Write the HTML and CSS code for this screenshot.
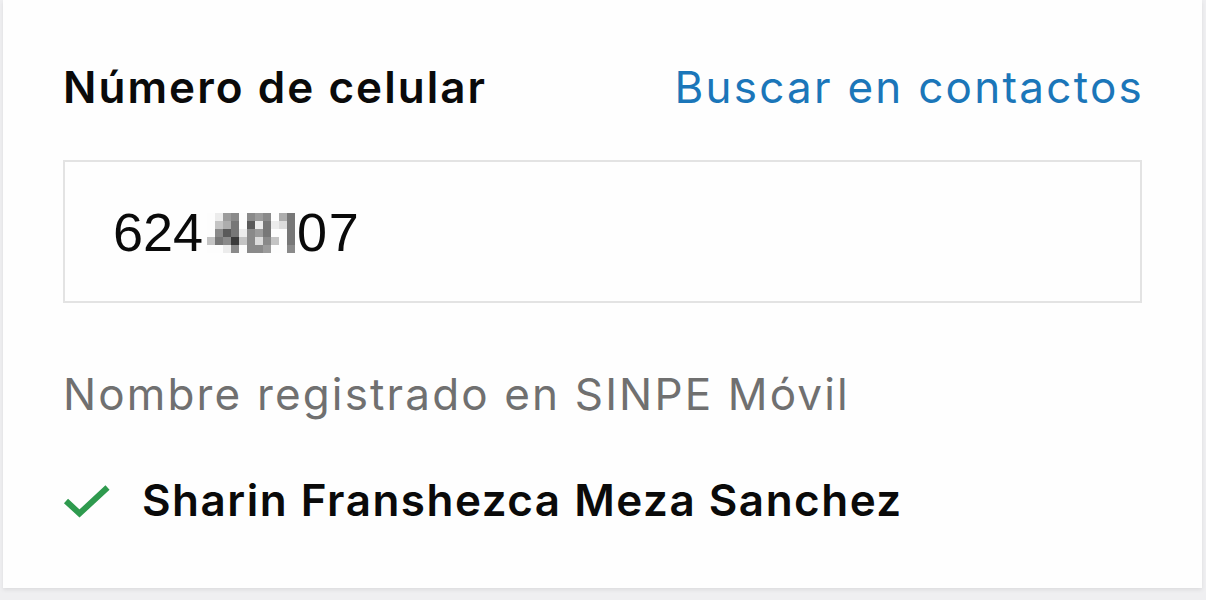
FILE: index.html
```html
<!DOCTYPE html>
<html lang="es">
<head>
<meta charset="utf-8">
<title>SINPE Móvil</title>
<link rel="stylesheet" href="styles.css">
</head>
<body>
<div class="card">
  <div class="header">
    <span class="label">Número de celular</span>
    <span class="link">Buscar en contactos</span>
  </div>
  <div class="input">
    <span class="num">624</span>
    <span class="pix">
      <i class="w"></i><i class="g1"></i><i class="g5"></i><i class="g6"></i><i class="w"></i><i class="g6"></i><i class="g5"></i><i class="g6"></i><i class="w"></i><i class="g4"></i><i class="g7"></i>
      <i class="w"></i><i class="g3"></i><i class="g4"></i><i class="g7"></i><i class="w"></i><i class="g8"></i><i class="g1"></i><i class="g7"></i><i class="g1"></i><i class="g2"></i><i class="g7"></i>
      <i class="w"></i><i class="g6"></i><i class="g8"></i><i class="g7"></i><i class="g1"></i><i class="g6"></i><i class="g5"></i><i class="g7"></i><i class="w"></i><i class="w"></i><i class="g7"></i>
      <i class="g3"></i><i class="g7"></i><i class="g6"></i><i class="g9"></i><i class="g3"></i><i class="g6"></i><i class="g2"></i><i class="g6"></i><i class="g3"></i><i class="w"></i><i class="g7"></i>
      <i class="w"></i><i class="w"></i><i class="g1"></i><i class="g6"></i><i class="w"></i><i class="g6"></i><i class="g6"></i><i class="g5"></i><i class="w"></i><i class="w"></i><i class="g6"></i>
    </span>
    <span class="num tail">07</span>
  </div>
  <div class="sub">Nombre registrado en SINPE Móvil</div>
  <div class="name-row">
    <svg class="check" viewBox="0 0 48 34" width="48" height="34"><path d="M3 17 L16.5 29.5 L44.5 3.5" fill="none" stroke="#2e9a4e" stroke-width="6"/></svg>
    <span class="name">Sharin Franshezca Meza Sanchez</span>
  </div>
</div>
</body>
</html>
```
FILE: styles.css
```css
html, body { margin: 0; padding: 0; }
body {
  background: #efeff1;
  font-family: Inter, "Noto Sans", sans-serif;
  width: 1206px;
  height: 600px;
  overflow: hidden;
}
.card {
  box-sizing: border-box;
  height: 588px;
  margin: 0 4px 0 3px;
  background: #fefefe;
  padding: 61px 60px 0 60px;
  box-shadow: 0 2px 4px rgba(0,0,0,0.08);
}
.header {
  display: flex;
  justify-content: space-between;
  align-items: baseline;
  height: 60px;
  line-height: 53px;
}
.label {
  font-size: 44px;
  font-weight: 600;
  letter-spacing: 2.05px;
  color: #0a0a0a;
}
.link {
  font-size: 44px;
  letter-spacing: 2.25px;
  margin-right: -2px;
  color: #1b76b9;
}
.input {
  box-sizing: border-box;
  margin-top: 39px;
  height: 143px;
  border: 2px solid #e3e3e3;
  padding-left: 48px;
  display: flex;
  align-items: center;
  font-family: "Liberation Sans", Arial, sans-serif;
  font-size: 54px;
  color: #0a0a0a;
}
.num { line-height: 1; }
.tail { margin-left: 2px; letter-spacing: 1.5px; }
.pix {
  display: grid;
  grid-template-columns: repeat(11, 8px);
  grid-template-rows: repeat(5, 8px);
  margin: 2px 0 0 4px;
}
.pix i { display: block; }
.w { background: #fdfdfd; }
.g1 { background: #ececec; }
.g2 { background: #dcdcdc; }
.g3 { background: #c4c4c4; }
.g4 { background: #adadad; }
.g5 { background: #9c9c9c; }
.g6 { background: #8a8a8a; }
.g7 { background: #777; }
.g8 { background: #5a5a5a; }
.g9 { background: #3a3a3a; }
.sub {
  margin-top: 65px;
  font-size: 44px;
  line-height: 53px;
  letter-spacing: 2.15px;
  color: #707070;
}
.name-row {
  display: flex;
  align-items: center;
  margin-top: 53px;
  height: 53px;
}
.check { flex: none; }
.name {
  margin-left: 31px;
  font-size: 44px;
  line-height: 53px;
  font-weight: 600;
  letter-spacing: 1.5px;
  color: #0a0a0a;
}
```
